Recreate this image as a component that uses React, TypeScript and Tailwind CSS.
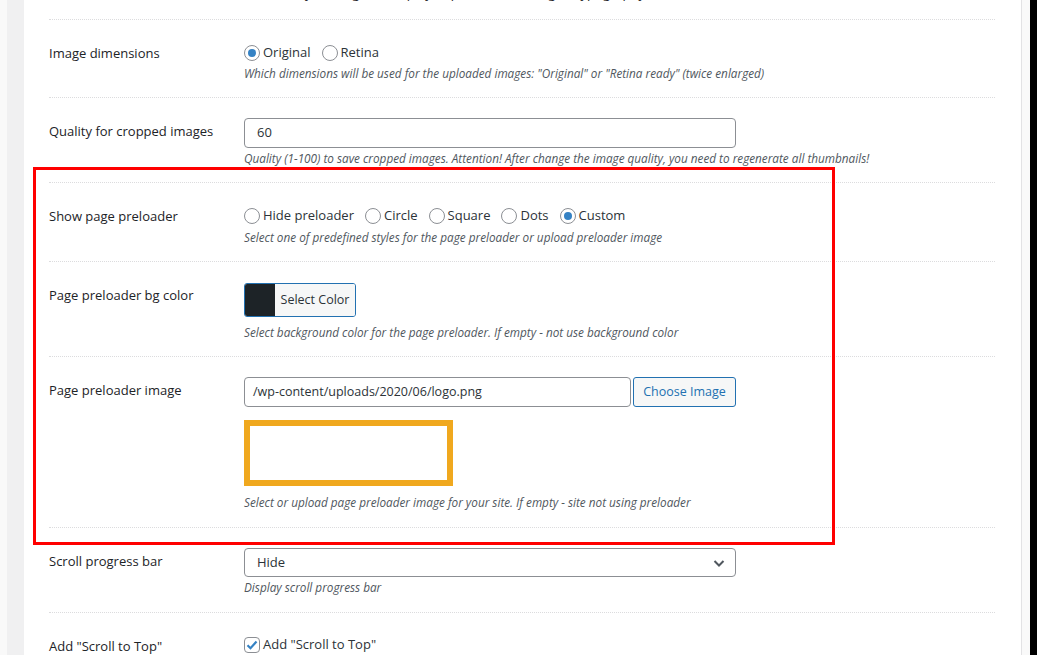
import React from 'react';

const font = { fontFamily: '"Open Sans", "Noto Sans", sans-serif' };

const Radio = ({ label, checked }: { label: string; checked?: boolean }) => (
  <span className="flex items-center mr-[11px]">
    <span className="w-4 h-4 rounded-full border border-[#8c8f94] bg-white flex items-center justify-center mr-[3px]">
      {checked && <span className="w-2 h-2 rounded-full bg-[#3582c4]" />}
    </span>
    <span className="text-[13px] text-[#2c3338]">{label}</span>
  </span>
);

const Desc = ({ children, className = '' }: { children: React.ReactNode; className?: string }) => (
  <p className={`text-[11.75px] leading-4 italic text-[#50575e] ${className}`}>{children}</p>
);

const Row = ({ label, children, pb = 'pb-4' }: { label: string; children: React.ReactNode; pb?: string }) => (
  <div className={`flex border-t border-dotted border-[#dcdcde] pt-5 ${pb}`}>
    <div className="w-[195px] shrink-0 mt-[3px] text-[13px] leading-5 font-medium text-[#1d2327]">{label}</div>
    <div className="flex-1">{children}</div>
  </div>
);

export default function App() {
  return (
    <div className="flex w-[1037px] h-[655px] overflow-hidden bg-[#f0f0f1]" style={font}>
      <div className="w-[7px] shrink-0 bg-[#f9f9f9]" />
      <div className="w-[17px] shrink-0 bg-[#f0f0f1]" />
      <div className="relative flex-1 bg-white pl-[25px] pr-[26px] pt-[19px]">
        <div className="absolute left-[220px] top-[-17px] text-[13px] leading-5 text-[#1d2327] whitespace-nowrap">
          Enable lazy loading and display of placeholder images (typography)
        </div>

        <Row label="Image dimensions">
          <div className="flex items-center h-5 mt-[3px]">
            <Radio label="Original" checked />
            <Radio label="Retina" />
          </div>
          <Desc className="mt-[2px]">
            Which dimensions will be used for the uploaded images: "Original" or "Retina ready" (twice enlarged)
          </Desc>
        </Row>

        <Row label="Quality for cropped images">
          <div className="w-[492px] h-[30px] border border-[#8c8f94] rounded-[4px] flex items-center px-3 text-[13px] text-[#2c3338]">
            60
          </div>
          <Desc className="mt-[2px]">
            Quality (1-100) to save cropped images. Attention! After change the image quality, you need to regenerate all thumbnails!
          </Desc>
        </Row>

        <Row label="Show page preloader">
          <div className="flex items-center h-5 mt-[3px]">
            <Radio label="Hide preloader" />
            <Radio label="Circle" />
            <Radio label="Square" />
            <Radio label="Dots" />
            <Radio label="Custom" checked />
          </div>
          <Desc className="mt-[3px]">Select one of predefined styles for the page preloader or upload preloader image</Desc>
        </Row>

        <Row label="Page preloader bg color">
          <div className="flex w-[112px] h-[34px] mt-[1px] border border-[#2271b1] rounded-[3px] overflow-hidden">
            <span className="w-[30px] bg-[#1d2327]" />
            <span className="flex-1 bg-[#f6f7f7] flex items-center justify-center text-[12.5px] text-[#2c3338]">Select Color</span>
          </div>
          <Desc className="mt-[7px]">Select background color for the page preloader. If empty - not use background color</Desc>
        </Row>

        <Row label="Page preloader image" pb="pb-[17px]">
          <div className="flex">
            <div className="w-[387px] h-[30px] border border-[#8c8f94] rounded-[4px] flex items-center px-2 text-[12.5px] text-[#2c3338]">
              /wp-content/uploads/2020/06/logo.png
            </div>
            <div className="ml-[2px] w-[103px] h-[30px] border border-[#2271b1] rounded-[3px] bg-[#f6f7f7] flex items-center justify-center text-[12.5px] text-[#2271b1]">
              Choose Image
            </div>
          </div>
          <div className="w-[209px] h-[66px] mt-[13px] border-[6px] border-[#f0a81e] bg-white" />
          <Desc className="mt-2">Select or upload page preloader image for your site. If empty - site not using preloader</Desc>
        </Row>

        <Row label="Scroll progress bar" pb="pb-[17px]">
          <div className="w-[492px] h-[29px] border border-[#8c8f94] rounded-[4px] flex items-center justify-between pl-3 pr-2 text-[13px] text-[#2c3338]">
            <span>Hide</span>
            <svg width="16" height="16" viewBox="0 0 16 16" fill="none" stroke="#50575e" strokeWidth="2">
              <path d="M3.5 6l4.5 4.5L12.5 6" />
            </svg>
          </div>
          <Desc className="mt-[2px]">Display scroll progress bar</Desc>
        </Row>

        <Row label={'Add "Scroll to Top"'}>
          <div className="flex items-center h-5 mt-[2px]">
            <span className="w-4 h-4 rounded-[4px] border border-[#8c8f94] bg-white flex items-center justify-center mr-[3px]">
              <svg width="14" height="14" viewBox="0 0 14 14" fill="none" stroke="#3582c4" strokeWidth="2.2">
                <path d="M2.5 7.2l3 3L11.5 3.5" />
              </svg>
            </span>
            <span className="text-[13px] text-[#2c3338]">Add "Scroll to Top"</span>
          </div>
        </Row>

        <div className="absolute left-[9px] top-[167px] w-[802px] h-[378px] border-[3px] border-[#ff0000] pointer-events-none" />
      </div>
      <div className="w-px shrink-0 bg-[#e2e2e4]" />
      <div className="w-[8px] shrink-0 bg-[#f9f9f9]" />
      <div className="w-[7px] shrink-0 bg-black" />
    </div>
  );
}
